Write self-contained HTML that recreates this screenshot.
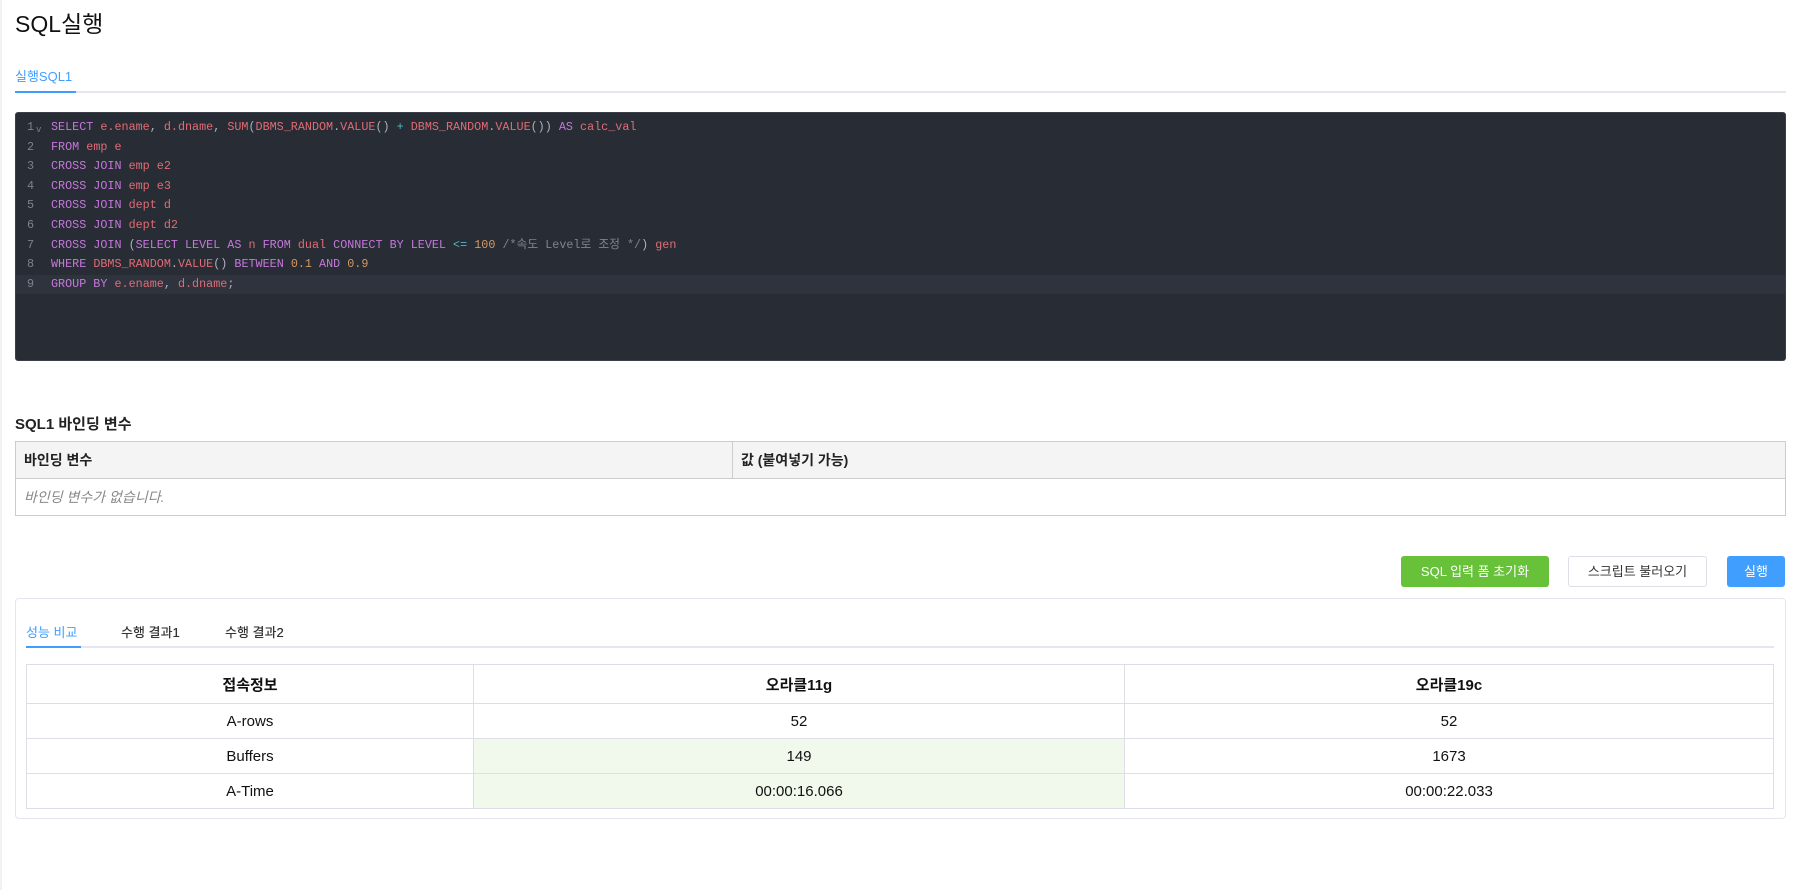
<!DOCTYPE html>
<html><head><meta charset="utf-8"><style>
*{box-sizing:border-box;margin:0;padding:0}
body{width:1802px;height:890px;background:#fff;font-family:"Liberation Sans","Noto Sans CJK KR",sans-serif;color:#222;position:relative;overflow:hidden}
.abs{position:absolute}
.title{left:15px;top:5px;font-size:23px;color:#111}
.tab1{left:15px;top:66px;font-size:13px;color:#409eff}
.tline{left:15px;top:91px;width:1771px;height:2px;background:#e4e7ed}
.tbar{left:15px;top:91px;width:61px;height:2px;background:#409eff}
.ed{left:15px;top:112px;width:1771px;height:249px;background:#282c34;border-radius:3px;border:1px solid #3a3f4a}
.code{position:absolute;left:0;top:5px;width:100%;font-family:"Liberation Mono","Noto Sans CJK KR",monospace;font-size:11.75px;color:#abb2bf}
.ln{height:19.6px;line-height:19.6px;white-space:pre;position:relative}
.ln .n{position:absolute;left:4px;width:14px;text-align:right;color:#7d8290}
.ln .t{position:absolute;left:35px}
.act{background:#2f333d}
.k{color:#c678dd}.i{color:#e06c75}.o{color:#56b6c2}.nu{color:#d19a66}.c{color:#7f848e}
.h2{left:15px;top:413px;font-size:15px;font-weight:bold;color:#222}
table{border-collapse:collapse}
.bt{left:15px;top:441px;width:1771px}
.bt td,.bt th{border:1px solid #ccc;height:37px;font-size:14px;padding:0 8px;text-align:left}
.bt th{background:#f4f4f4;height:37px}
.bt td{color:#888;font-style:italic}
.btn{top:556px;height:31px;border-radius:3px;font-size:13px;line-height:31px;text-align:center}
.panel{left:15px;top:598px;width:1771px;height:221px;border:1px solid #e4e7ed;border-radius:4px}
.it{top:622px;font-size:13px;color:#303133}
.rt{left:26px;top:664px;width:1748px}
.rt td,.rt th{border:1px solid #dcdfe6;text-align:center;font-size:15px;height:35px;color:#111}
.rt th{height:39px;font-weight:bold}
.g{background:#f0f9eb}
</style></head><body>
<div class="abs" style="left:0;top:0;width:2px;height:890px;background:#f2f2f2"></div>
<div class="abs title">SQL실행</div>
<div class="abs tab1">실행SQL1</div>
<div class="abs tline"></div><div class="abs tbar"></div>
<div class="abs ed"><div class="code">
<div class="ln"><span class="n">1</span><span class="abs" style="left:20px;top:3px;font-size:9px;color:#7d8290">v</span><span class="t"><span class="k">SELECT</span> <span class="i">e.ename</span>, <span class="i">d.dname</span>, <span class="i">SUM</span>(<span class="i">DBMS_RANDOM</span>.<span class="i">VALUE</span>() <span class="o">+</span> <span class="i">DBMS_RANDOM</span>.<span class="i">VALUE</span>()) <span class="k">AS</span> <span class="i">calc_val</span></span></div>
<div class="ln"><span class="n">2</span><span class="t"><span class="k">FROM</span> <span class="i">emp e</span></span></div>
<div class="ln"><span class="n">3</span><span class="t"><span class="k">CROSS JOIN</span> <span class="i">emp e2</span></span></div>
<div class="ln"><span class="n">4</span><span class="t"><span class="k">CROSS JOIN</span> <span class="i">emp e3</span></span></div>
<div class="ln"><span class="n">5</span><span class="t"><span class="k">CROSS JOIN</span> <span class="i">dept d</span></span></div>
<div class="ln"><span class="n">6</span><span class="t"><span class="k">CROSS JOIN</span> <span class="i">dept d2</span></span></div>
<div class="ln"><span class="n">7</span><span class="t"><span class="k">CROSS JOIN</span> (<span class="k">SELECT LEVEL AS</span> <span class="i">n</span> <span class="k">FROM</span> <span class="i">dual</span> <span class="k">CONNECT BY LEVEL</span> <span class="o">&lt;=</span> <span class="nu">100</span> <span class="c">/*속도 Level로 조정 */</span>) <span class="i">gen</span></span></div>
<div class="ln"><span class="n">8</span><span class="t"><span class="k">WHERE</span> <span class="i">DBMS_RANDOM</span>.<span class="i">VALUE</span>() <span class="k">BETWEEN</span> <span class="nu">0.1</span> <span class="k">AND</span> <span class="nu">0.9</span></span></div>
<div class="ln act"><span class="n">9</span><span class="t"><span class="k">GROUP BY</span> <span class="i">e.ename</span>, <span class="i">d.dname</span>;</span></div>
</div></div>
<div class="abs h2">SQL1 바인딩 변수</div>
<table class="abs bt"><tr><th style="width:717px">바인딩 변수</th><th>값 (붙여넣기 가능)</th></tr><tr><td colspan="2">바인딩 변수가 없습니다.</td></tr></table>
<div class="abs btn" style="left:1401px;width:148px;background:#67c23a;color:#fff">SQL 입력 폼 초기화</div>
<div class="abs btn" style="left:1568px;width:139px;border:1px solid #dcdfe6;color:#333;line-height:29px">스크립트 불러오기</div>
<div class="abs btn" style="left:1727px;width:58px;background:#409eff;color:#fff">실행</div>
<div class="abs panel"></div>
<div class="abs it" style="left:26px;color:#409eff">성능 비교</div>
<div class="abs it" style="left:121px;text-shadow:0 0 0.4px #303133">수행 결과1</div>
<div class="abs it" style="left:225px;text-shadow:0 0 0.4px #303133">수행 결과2</div>
<div class="abs" style="left:26px;top:646px;width:1748px;height:2px;background:#e4e7ed"></div>
<div class="abs" style="left:26px;top:646px;width:55px;height:2px;background:#409eff"></div>
<table class="abs rt">
<tr><th style="width:447px">접속정보</th><th style="width:651px">오라클11g</th><th>오라클19c</th></tr>
<tr><td>A-rows</td><td>52</td><td>52</td></tr>
<tr><td>Buffers</td><td class="g">149</td><td>1673</td></tr>
<tr><td>A-Time</td><td class="g">00:00:16.066</td><td>00:00:22.033</td></tr>
</table>
</body></html>
